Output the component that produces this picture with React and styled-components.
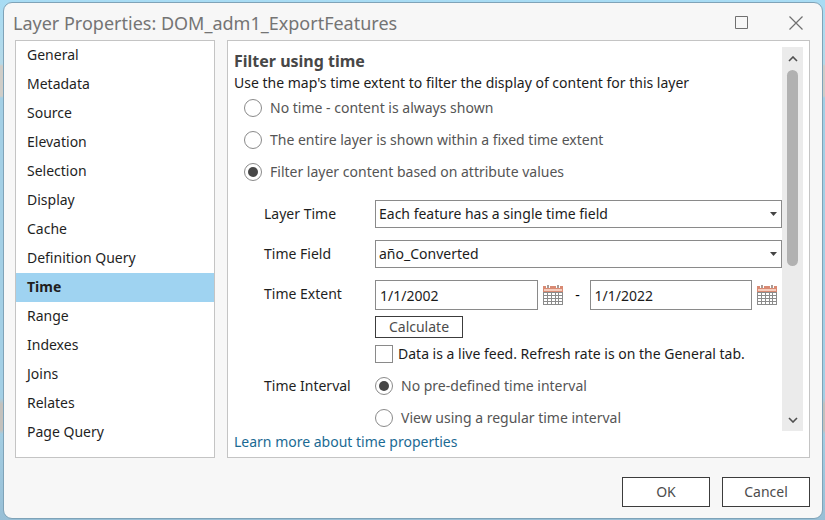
import React, { useState } from "react";
import styled, { createGlobalStyle, css } from "styled-components";

const GlobalStyle = createGlobalStyle`
  *, *::before, *::after { box-sizing: border-box; }
  body { margin: 0; background: #a9d0e6; }
  body, button, input, select {
    font-family: "Noto Sans", "Open Sans", sans-serif;
    font-size: 14px;
    line-height: 20px;
  }
`;

const Desktop = styled.div`
  display: flex;
  height: 100vh;
  padding: 2px 2px 1px 3px;
  background: linear-gradient(
    180deg, #a8dcf4 0, #b5d9e8 64px, #cfcdc8 66px, #cfcdc8 96px, #a3cfe5 98px,
    #a3cfe5 398px, #c3c1bd 404px, #c3c1bd 430px, #a3cde2 434px, #98bfd6 100%
  );
`;

const Dialog = styled.section`
  flex: 1;
  min-width: 0;
  display: flex;
  flex-direction: column;
  padding: 0 12px 11px 11px;
  background: #f7f7f7;
  border: 1px solid #7fa3b8;
  border-radius: 9px;
`;

const TitleBar = styled.header`
  display: flex;
  align-items: center;
  justify-content: space-between;
  height: 37px;
  padding: 2px 0 0;
`;

const Title = styled.h1`
  margin: 0 0 0 -2px;
  font-size: 18px;
  line-height: 26px;
  font-weight: 400;
  color: #747474;
`;

const WindowButtons = styled.div`
  display: flex;
  gap: 27px;
`;

const IconButton = styled.button`
  display: grid;
  place-items: center;
  width: 28px;
  height: 28px;
  padding: 0;
  border: 0;
  background: none;
  color: #707070;
`;

const Body = styled.div`
  flex: 1;
  min-height: 0;
  display: flex;
  gap: 12px;
`;

const Sidebar = styled.nav`
  flex: 0 0 200px;
  overflow: hidden;
  background: #fff;
  border: 1px solid #c4c4c4;
`;

const NavItem = styled.button`
  display: block;
  width: 100%;
  height: 29px;
  padding: 0 11px 2px;
  border: 0;
  text-align: left;
  color: #1f1f1f;
  background: ${(p) => (p.$active ? "#9fd3f1" : "transparent")};
  font-weight: ${(p) => (p.$active ? 700 : 400)};
`;

const Panel = styled.main`
  flex: 1;
  min-width: 0;
  display: flex;
  flex-direction: column;
  padding: 6px 6px 5px;
  background: #fff;
  border: 1px solid #c4c4c4;
`;

const ScrollArea = styled.div`
  flex: 1;
  display: flex;
  min-height: 0;
`;

const Content = styled.div`
  flex: 1;
  min-width: 0;
  overflow-y: auto;
  scrollbar-width: none;
`;

const Heading = styled.h2`
  margin: 0;
  padding-top: 2px;
  font-size: 16px;
  line-height: 24px;
  font-weight: 700;
  color: #474747;
`;

const Intro = styled.p`
  margin: 0;
  line-height: 19px;
  color: #1c1c1c;
`;

const RadioGroup = styled.div`
  padding-left: ${(p) => (p.$indent ? "10px" : "0")};
`;

const Choice = styled.label`
  display: flex;
  align-items: center;
  gap: 8px;
  height: 32px;
  color: #555;
`;

const CheckChoice = styled(Choice)`
  gap: 5px;
  color: #1c1c1c;
`;

const tickControl = css`
  appearance: none;
  flex: none;
  display: grid;
  place-content: center;
  width: 18px;
  height: 18px;
  margin: 0;
  background: #fff;
  border: 1px solid #8a8a8a;
`;

const Radio = styled.input.attrs({ type: "radio" })`
  ${tickControl}
  border-radius: 50%;
  &:checked::before {
    content: "";
    width: 10px;
    height: 10px;
    border-radius: 50%;
    background: #474747;
  }
`;

const Checkbox = styled.input.attrs({ type: "checkbox" })`
  ${tickControl}
  &:checked::before {
    content: "";
    width: 10px;
    height: 10px;
    background: #474747;
  }
`;

const Form = styled.div`
  display: grid;
  grid-template-columns: 111px minmax(0, 1fr);
  row-gap: 12px;
  padding: 12px 0 0 30px;
`;

const FieldLabel = styled.label`
  height: 28px;
  line-height: 28px;
  color: #1f1f1f;
`;

const IntervalLabel = styled(FieldLabel).attrs({ as: "span" })`
  line-height: 32px;
`;

const SelectBox = styled.div`
  display: grid;
  align-items: center;
  height: 28px;
  > * { grid-area: 1 / 1; }
  > svg { justify-self: end; margin-right: 5px; pointer-events: none; }
`;

const Select = styled.select`
  appearance: none;
  width: 100%;
  height: 28px;
  padding: 0 20px 0 3px;
  border: 1px solid #8a8a8a;
  border-radius: 0;
  background: #fff;
  color: #1c1c1c;
`;

const ExtentColumn = styled.div`
  display: flex;
  flex-direction: column;
  align-items: flex-start;
`;

const DateRange = styled.div`
  display: flex;
  align-items: center;
  align-self: stretch;
  gap: 5px;
  padding-right: 5px;
`;

const DateInput = styled.input`
  flex: 1;
  min-width: 0;
  height: 30px;
  padding: 0 4px;
  border: 1px solid #8a8a8a;
  color: #1c1c1c;
`;

const CalendarButton = styled(IconButton)`
  width: 20px;
  height: 20px;
`;

const Dash = styled.span`
  width: 17px;
  padding-left: 3px;
  text-align: center;
`;

const Button = styled.button`
  width: 88px;
  height: ${(p) => (p.$small ? "22px" : "30px")};
  padding: 0;
  border: 1px solid #3c3c3c;
  background: #fff;
  color: #4c4c4c;
`;

const CalculateButton = styled(Button)`
  margin: 6px 0 0;
`;

const IntervalRows = styled.div`
  margin-top: -12px;
`;

const ScrollBar = styled.div`
  flex: 0 0 21px;
  display: flex;
  flex-direction: column;
  align-items: center;
  background: #ebebeb;
`;

const ScrollButton = styled(IconButton)`
  flex: none;
  width: 21px;
  height: 23px;
  color: #505050;
`;

const Track = styled.div`
  flex: 1;
  width: 11px;
`;

const Thumb = styled.div`
  height: 58%;
  border-radius: 6px;
  background: #b1b1b1;
`;

const HelpLink = styled.a`
  align-self: flex-start;
  line-height: 21px;
  color: #1b6a93;
  text-decoration: none;
`;

const Footer = styled.footer`
  display: flex;
  justify-content: flex-end;
  gap: 12px;
  padding-top: 19px;
`;

const CalendarIcon = () => (
  <svg width="20" height="20" viewBox="0 0 20 20" aria-hidden="true">
    <path d="M0 1h20v6H0z" fill="#d98a73" />
    <path d="M1 4h18v2H1z" fill="#f5cdbd" />
    <path d="M3 0h4v3H3zM13 0h4v3h-4z" fill="#fff" />
    <path d="M4 0h2v3H4zM14 0h2v3h-2z" fill="#a89b96" />
    <path d="M0 7h20v13H0z" fill="#8b8b8b" />
    <path
      d="M1 8h3v2H1zM5 8h3v2H5zM9 8h3v2H9zM13 8h2v2h-2zM16 8h3v2h-3zM1 11h3v2H1zM5 11h3v2H5zM9 11h3v2H9zM13 11h2v2h-2zM16 11h3v2h-3zM1 14h3v2H1zM5 14h3v2H5zM9 14h3v2H9zM13 14h2v2h-2zM16 14h3v2h-3zM1 17h3v2H1zM5 17h3v2H5zM9 17h3v2H9zM13 17h2v2h-2zM16 17h3v2h-3z"
      fill="#fff"
    />
  </svg>
);

const DropArrow = () => (
  <svg width="7" height="4" viewBox="0 0 7 4" aria-hidden="true">
    <path d="M0 0h7L3.5 4z" fill="#444" />
  </svg>
);

const Chevron = ({ d }) => (
  <svg width="10" height="6" viewBox="0 0 10 6" fill="none" stroke="currentColor" strokeWidth="1.6" aria-hidden="true">
    <path d={d} />
  </svg>
);

const pages = [
  "General", "Metadata", "Source", "Elevation", "Selection", "Display", "Cache",
  "Definition Query", "Time", "Range", "Indexes", "Joins", "Relates", "Page Query",
];

const filterModes = [
  "No time - content is always shown",
  "The entire layer is shown within a fixed time extent",
  "Filter layer content based on attribute values",
];

const intervals = ["No pre-defined time interval", "View using a regular time interval"];

function RadioList({ name, options, initial, indent }) {
  const [value, setValue] = useState(initial);
  return (
    <RadioGroup $indent={indent} role="radiogroup">
      {options.map((option) => (
        <Choice key={option}>
          <Radio name={name} checked={value === option} onChange={() => setValue(option)} />
          {option}
        </Choice>
      ))}
    </RadioGroup>
  );
}

function SelectField({ id, label, value }) {
  return (
    <>
      <FieldLabel htmlFor={id}>{label}</FieldLabel>
      <SelectBox>
        <Select id={id} defaultValue={value}>
          <option>{value}</option>
        </Select>
        <DropArrow />
      </SelectBox>
    </>
  );
}

export default function App() {
  const [page, setPage] = useState("Time");
  return (
    <>
      <GlobalStyle />
      <Desktop>
        <Dialog role="dialog" aria-labelledby="dialog-title">
          <TitleBar>
            <Title id="dialog-title">Layer Properties: DOM_adm1_ExportFeatures</Title>
            <WindowButtons>
              <IconButton aria-label="Maximize">
                <svg width="13" height="13" viewBox="0 0 13 13" fill="none" stroke="currentColor">
                  <path d="M.5 .5h12v12H.5z" />
                </svg>
              </IconButton>
              <IconButton aria-label="Close">
                <svg width="14" height="14" viewBox="0 0 14 14" fill="none" stroke="currentColor" strokeWidth="1.2">
                  <path d="M.5 .5l13 13M13.5 .5l-13 13" />
                </svg>
              </IconButton>
            </WindowButtons>
          </TitleBar>
          <Body>
            <Sidebar>
              {pages.map((name) => (
                <NavItem key={name} $active={name === page} onClick={() => setPage(name)}>
                  {name}
                </NavItem>
              ))}
            </Sidebar>
            <Panel>
              <ScrollArea>
                <Content>
                  <Heading>Filter using time</Heading>
                  <Intro>Use the map's time extent to filter the display of content for this layer</Intro>
                  <RadioList name="mode" options={filterModes} initial={filterModes[2]} indent />
                  <Form>
                    <SelectField id="layer-time" label="Layer Time" value="Each feature has a single time field" />
                    <SelectField id="time-field" label="Time Field" value="año_Converted" />
                    <FieldLabel htmlFor="start">Time Extent</FieldLabel>
                    <ExtentColumn>
                      <DateRange>
                        <DateInput id="start" defaultValue="1/1/2002" />
                        <CalendarButton aria-label="Pick start date"><CalendarIcon /></CalendarButton>
                        <Dash>-</Dash>
                        <DateInput aria-label="End date" defaultValue="1/1/2022" />
                        <CalendarButton aria-label="Pick end date"><CalendarIcon /></CalendarButton>
                      </DateRange>
                      <CalculateButton $small>Calculate</CalculateButton>
                      <CheckChoice>
                        <Checkbox />
                        Data is a live feed. Refresh rate is on the General tab.
                      </CheckChoice>
                    </ExtentColumn>
                    <IntervalRows>
                      <IntervalLabel>Time Interval</IntervalLabel>
                    </IntervalRows>
                    <IntervalRows>
                      <RadioList name="interval" options={intervals} initial={intervals[0]} />
                    </IntervalRows>
                  </Form>
                </Content>
                <ScrollBar>
                  <ScrollButton aria-label="Scroll up"><Chevron d="M1 5l4-4 4 4" /></ScrollButton>
                  <Track><Thumb /></Track>
                  <ScrollButton aria-label="Scroll down"><Chevron d="M1 1l4 4 4-4" /></ScrollButton>
                </ScrollBar>
              </ScrollArea>
              <HelpLink href="#time-properties">Learn more about time properties</HelpLink>
            </Panel>
          </Body>
          <Footer>
            <Button>OK</Button>
            <Button>Cancel</Button>
          </Footer>
        </Dialog>
      </Desktop>
    </>
  );
}
